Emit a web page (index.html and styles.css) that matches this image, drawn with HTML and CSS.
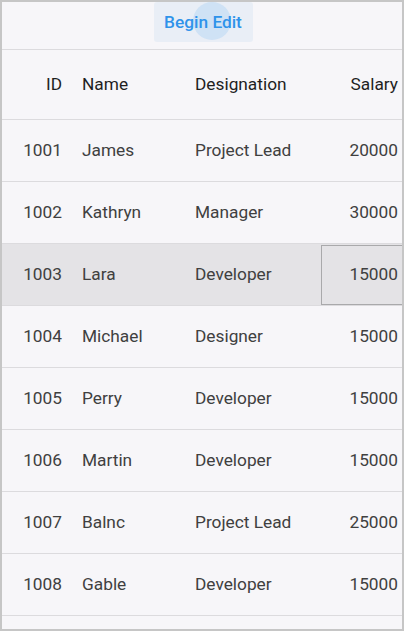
FILE: index.html
```html
<!DOCTYPE html>
<html>
<head>
<meta charset="utf-8">
<link rel="stylesheet" href="styles.css">
</head>
<body>
<div class="frame">
  <div class="toolbar">
    <button class="btn"><span class="ripple"></span><span class="btn-label">Begin Edit</span></button>
  </div>
  <div class="grid">
    <div class="row header">
      <div class="cell num">ID</div>
      <div class="cell">Name</div>
      <div class="cell">Designation</div>
      <div class="cell num last">Salary</div>
    </div>
    <div class="row"><div class="cell num">1001</div><div class="cell">James</div><div class="cell">Project Lead</div><div class="cell num last">20000</div></div>
    <div class="row"><div class="cell num">1002</div><div class="cell">Kathryn</div><div class="cell">Manager</div><div class="cell num last">30000</div></div>
    <div class="row selected"><div class="cell num">1003</div><div class="cell">Lara</div><div class="cell">Developer</div><div class="cell num last current">15000</div></div>
    <div class="row"><div class="cell num">1004</div><div class="cell">Michael</div><div class="cell">Designer</div><div class="cell num last">15000</div></div>
    <div class="row"><div class="cell num">1005</div><div class="cell">Perry</div><div class="cell">Developer</div><div class="cell num last">15000</div></div>
    <div class="row"><div class="cell num">1006</div><div class="cell">Martin</div><div class="cell">Developer</div><div class="cell num last">15000</div></div>
    <div class="row"><div class="cell num">1007</div><div class="cell">Balnc</div><div class="cell">Project Lead</div><div class="cell num last">25000</div></div>
    <div class="row"><div class="cell num">1008</div><div class="cell">Gable</div><div class="cell">Developer</div><div class="cell num last">15000</div></div>
  </div>
</div>
</body>
</html>
```
FILE: styles.css
```css
html, body {
  margin: 0;
  padding: 0;
}
body {
  font-family: Roboto, "Liberation Sans", sans-serif;
  background: #f7f6f9;
}
.frame {
  width: 404px;
  height: 631px;
  box-sizing: border-box;
  border: 2px solid #c6c6c6;
  background: #f7f6f9;
  overflow: hidden;
  display: flex;
  flex-direction: column;
}
.toolbar {
  height: 47px;
  display: flex;
  justify-content: center;
  align-items: flex-start;
}
.btn {
  position: relative;
  overflow: hidden;
  width: 99px;
  height: 40px;
  margin-left: 2px;
  border: none;
  border-radius: 3px;
  background: #e9eef6;
  padding: 0;
  font-family: Roboto, "Liberation Sans", sans-serif;
  font-size: 17.3px;
  font-weight: 500;
  color: #2f93ea;
  cursor: pointer;
}
.btn-label {
  position: relative;
}
.ripple {
  position: absolute;
  left: 39px;
  top: 0px;
  width: 38px;
  height: 38px;
  border-radius: 50%;
  background: #cfe2f5;
}
.grid {
  border-top: 1px solid #dcdbde;
}
.row {
  display: grid;
  grid-template-columns: 68px 113px 138px 81px;
  height: 62px;
  box-sizing: border-box;
  border-bottom: 1px solid #dcdbde;
  font-size: 17.3px;
  color: #404040;
}
.row.header {
  height: 70px;
  font-weight: 400;
  color: #1f1f1f;
}
.row.selected {
  background: #e4e3e6;
}
.cell {
  display: flex;
  align-items: center;
  padding-left: 12px;
  padding-bottom: 2px;
  white-space: nowrap;
}
.cell.num {
  justify-content: flex-end;
  padding-left: 0;
  padding-right: 8px;
}
.cell.last {
  padding-right: 4px;
}
.cell.current {
  border: 1px solid #a9a9ab;
  border-right: none;
  margin-top: 1px;
  padding-bottom: 3px;
}
```
